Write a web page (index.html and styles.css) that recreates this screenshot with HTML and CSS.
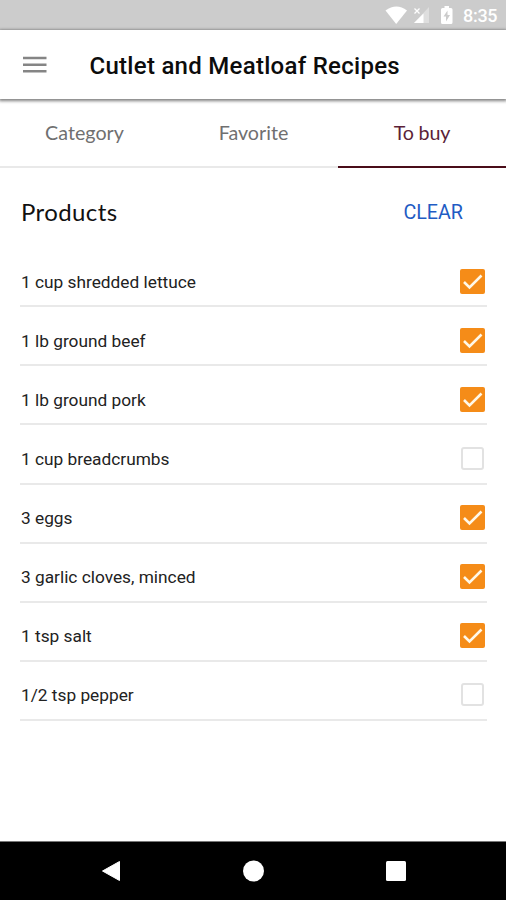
FILE: index.html
```html
<!DOCTYPE html>
<html lang="en">
<head>
<meta charset="utf-8">
<title>Cutlet and Meatloaf Recipes</title>
<link rel="stylesheet" href="styles.css">
</head>
<body>
<div class="status">
  <svg class="status-icons" width="74" height="30" viewBox="0 0 74 30" fill="#fff">
    <path d="M.5 10.5Q11.500 2.500 22 10.500L11.200 24Z"/>
    <path d="M44 7V23H29Z" opacity=".35"/>
    <path d="M38.500 13.500V23H29Z"/>
    <path d="M29.500 8.500l5 5m0-5l-5 5" stroke="#fff" stroke-width="1.300"/>
    <path d="M57.500 8h2V6h4.500v2h2q1.500 0 1.500 1.500v13q0 1.500-1.500 1.500h-8.500q-1.500 0-1.500-1.500v-13q0-1.500 1.500-1.500z"/>
    <path d="M62.500 10.500l-4 6h2.500v5l4-6.500h-2.500z" fill="#ccc"/>
  </svg>
  <span class="time">8:35</span>
</div>
<header class="appbar">
  <svg class="menu" width="24" height="18" viewBox="0 0 24 18"><path d="M0 2h23.500M0 8.700h23.500M0 15.300h23.500" stroke="#858585" stroke-width="2.500"/></svg>
  <h1>Cutlet and Meatloaf Recipes</h1>
</header>
<nav class="tabs">
  <div class="tab">Category</div>
  <div class="tab">Favorite</div>
  <div class="tab active">To buy</div>
</nav>
<main>
  <div class="heading"><h2>Products</h2><span class="clear">CLEAR</span></div>
  <ul class="list">
    <li><span>1 cup shredded lettuce</span><i class="box on"><svg viewBox="0 0 25 25"><path d="M4 13l5.500 5.500L21.500 6.500"/></svg></i></li>
    <li><span>1 lb ground beef</span><i class="box on"><svg viewBox="0 0 25 25"><path d="M4 13l5.500 5.500L21.500 6.500"/></svg></i></li>
    <li><span>1 lb ground pork</span><i class="box on"><svg viewBox="0 0 25 25"><path d="M4 13l5.500 5.500L21.500 6.500"/></svg></i></li>
    <li><span>1 cup breadcrumbs</span><i class="box"></i></li>
    <li><span>3 eggs</span><i class="box on"><svg viewBox="0 0 25 25"><path d="M4 13l5.500 5.500L21.500 6.500"/></svg></i></li>
    <li><span>3 garlic cloves, minced</span><i class="box on"><svg viewBox="0 0 25 25"><path d="M4 13l5.500 5.500L21.500 6.500"/></svg></i></li>
    <li><span>1 tsp salt</span><i class="box on"><svg viewBox="0 0 25 25"><path d="M4 13l5.500 5.500L21.500 6.500"/></svg></i></li>
    <li><span>1/2 tsp pepper</span><i class="box"></i></li>
  </ul>
</main>
<footer class="navbar">
  <svg width="20" height="22" viewBox="0 0 20 22"><path d="M1.500 11L18.500 1.500V20.500Z" fill="#fff" stroke="#fff" stroke-linejoin="round"/></svg>
  <svg width="22" height="22" viewBox="0 0 22 22"><circle cx="10.500" cy="11" r="10.500" fill="#fff"/></svg>
  <svg width="20" height="20" viewBox="0 0 20 20"><rect width="20" height="20" rx="1.500" fill="#fff"/></svg>
</footer>
</body>
</html>
```
FILE: styles.css
```css
* { box-sizing: border-box; }
body {
  margin: 0;
  height: 900px;
  display: flex;
  flex-direction: column;
  background: #fff;
  font-family: Roboto, sans-serif;
  color: #111;
  overflow: hidden;
}
h1, h2, ul { margin: 0; padding: 0; }
.status {
  height: 30px;
  background: #ccc;
  color: #fff;
  display: flex;
  align-items: center;
  justify-content: flex-end;
  padding-right: 9px;
}
.status-icons { margin-right: 4px; }
.time { font-size: 18px; line-height: 30px; font-weight: 500; width: 34px; white-space: nowrap; letter-spacing: -0.3px; padding-top: 2px; }
.appbar {
  height: 69px;
  display: flex;
  align-items: center;
  padding-left: 23px;
  box-shadow: 0 1px 3px 1px rgba(0, 0, 0, .5);
  z-index: 1;
}
.menu { margin-right: 42.5px; }
h1 { font-size: 24px; font-weight: 500; line-height: 30px; letter-spacing: .28px; padding-top: 2px; color: #0c0c0c; }
.tabs {
  height: 69px;
  display: grid;
  grid-template-columns: 169px 169px 1fr;
}
.tab {
  font: 400 19.700px/24px Lato, sans-serif;
  color: #707070;
  text-align: center;
  padding-top: 22px;
  border-bottom: 2px solid #e9e9e9;
}
.tab.active { color: #5c1f38; border-color: #4a0d19; letter-spacing: -.2px; }
main { flex: 1; padding: 0 19px 0 20px; }
.heading {
  height: 80px;
  display: flex;
  align-items: center;
  justify-content: space-between;
  padding: 10px 24px 0 1px;
}
h2 { font: 400 24px/30px Lato, sans-serif; letter-spacing: .4px; padding-bottom: 2px; }
.clear { color: #1f5cc4; font-size: 19.700px; line-height: 24px; }
.list { list-style: none; }
.list li {
  height: 59.140px;
  display: flex;
  align-items: center;
  justify-content: space-between;
  padding: 9px 2px 0 1px;
  border-bottom: 2px solid #e9e9e9;
  font-size: 17.300px;
  color: #222;
}
.list span { padding-top: 1px; }
.box {
  width: 23px;
  height: 23px;
  margin-right: 1px;
  border: 2px solid #e2e2e2;
  border-radius: 3px;
}
.box.on { width: 25px; height: 25px; margin-right: 0; border: 0; border-radius: 2px; background: #f58c18; }
.box svg { display: block; }
.box path { fill: none; stroke: #fff8e8; stroke-width: 2.600; }
.navbar {
  height: 59px;
  background: #000;
  border-top: 1px solid #777;
  display: flex;
  align-items: center;
  justify-content: space-between;
  padding: 0 100px 0 101px;
}
```
